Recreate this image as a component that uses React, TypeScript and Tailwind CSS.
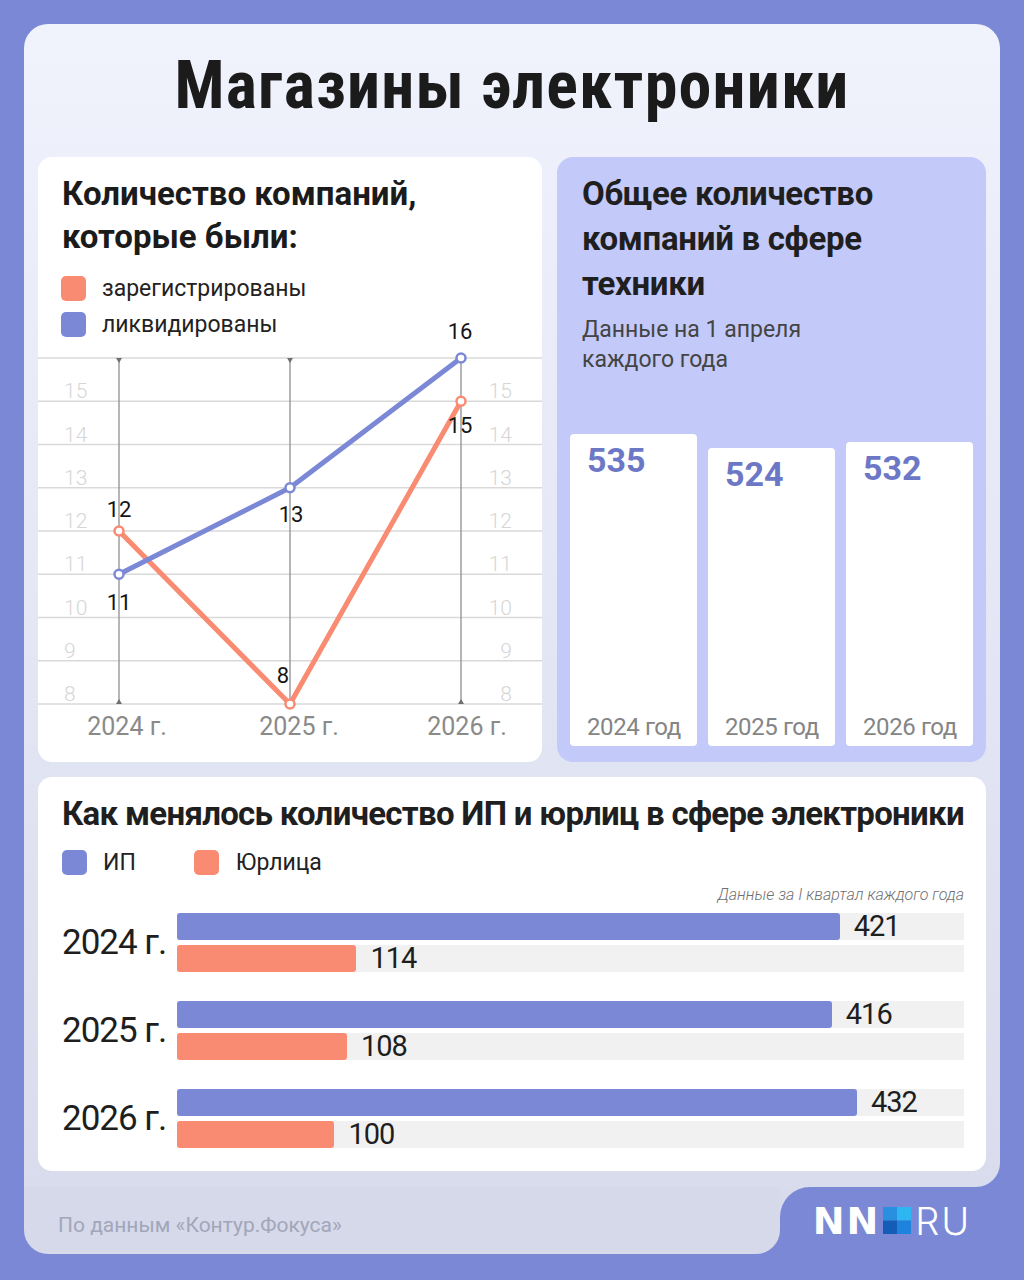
import React from 'react'

const yearly = [
  { year: '2024 г.', ip: 421, ul: 114 },
  { year: '2025 г.', ip: 416, ul: 108 },
  { year: '2026 г.', ip: 432, ul: 100 },
]

const totals = [
  { value: 535, label: '2024 год', height: 'h-[312px]' },
  { value: 524, label: '2025 год', height: 'h-[298px]' },
  { value: 532, label: '2026 год', height: 'h-[304px]' },
]

// chart geometry (svg coords)
const TOP = 21
const STEP = 43.25
const yOf = (v: number) => TOP + (16 - v) * STEP
const XS = [81, 252, 423]
const REG = [12, 8, 15]
const LIQ = [11, 13, 16]

function LineChart() {
  const gridValues = [16, 15, 14, 13, 12, 11, 10, 9, 8]
  const axisLabels = [15, 14, 13, 12, 11, 10, 9, 8]
  const pts = (arr: number[]) => arr.map((v, i) => `${XS[i]},${yOf(v)}`).join(' ')

  return (
    <svg width="504" height="424" viewBox="0 0 504 424" className="block overflow-visible">
      {gridValues.map((v) => (
        <line key={v} x1="0" x2="504" y1={yOf(v)} y2={yOf(v)} stroke="#d9d9d9" strokeWidth="1.3" />
      ))}
      {axisLabels.map((v) => (
        <g key={v} fill="#d6d6d6" fontSize="21" fontWeight="300" fontFamily="Roboto, sans-serif">
          <text x="26" y={yOf(v) - 3}>{v}</text>
          <text x="474" y={yOf(v) - 3} textAnchor="end">{v}</text>
        </g>
      ))}
      {XS.map((x) => (
        <line key={x} x1={x} x2={x} y1={TOP} y2={yOf(8)} stroke="#8f8f8f" strokeWidth="1.3" />
      ))}
      {/* ticks */}
      <g fill="#6f6f6f">
        <polygon points={`78,${TOP} 84,${TOP} 81,${TOP + 5}`} />
        <polygon points={`249,${TOP} 255,${TOP} 252,${TOP + 5}`} />
        <polygon points={`78,${yOf(8)} 84,${yOf(8)} 81,${yOf(8) - 5}`} />
        <polygon points={`420,${yOf(8)} 426,${yOf(8)} 423,${yOf(8) - 5}`} />
      </g>

      <polyline points={pts(REG)} fill="none" stroke="#f98b73" strokeWidth="5" strokeLinejoin="round" />
      <polyline points={pts(LIQ)} fill="none" stroke="#7b88d6" strokeWidth="5" strokeLinejoin="round" />
      {REG.map((v, i) => (
        <circle key={'r' + i} cx={XS[i]} cy={yOf(v)} r="4.5" fill="#fff" stroke="#f98b73" strokeWidth="2.5" />
      ))}
      {LIQ.map((v, i) => (
        <circle key={'l' + i} cx={XS[i]} cy={yOf(v)} r="4.5" fill="#fff" stroke="#7b88d6" strokeWidth="2.5" />
      ))}

      <g fill="#151515" fontSize="22" fontFamily="Roboto, sans-serif" textAnchor="middle">
        <text x="81" y="180">12</text>
        <text x="81" y="273">11</text>
        <text x="253" y="185">13</text>
        <text x="245" y="346">8</text>
        <text x="422" y="2">16</text>
        <text x="422" y="96">15</text>
      </g>

      <g fill="#8a8a8a" fontSize="25" fontFamily="Roboto, sans-serif" textAnchor="middle">
        <text x="89" y="398">2024 г.</text>
        <text x="261" y="398">2025 г.</text>
        <text x="429" y="398">2026 г.</text>
      </g>
    </svg>
  )
}

function Bar({ value, color }: { value: number; color: string }) {
  return (
    <div className="flex h-[27px] items-center bg-[#f1f1f1]">
      <div className={`h-full rounded-[3px] ${color}`} style={{ width: `${(value / 500) * 100}%` }} />
      <span className="ml-[14px] text-[29px] leading-none tracking-[-1px] text-[#1e1e1e]">{value}</span>
    </div>
  )
}

export default function App() {
  return (
    <div className="min-h-screen bg-[#7b88d6] px-[24px] pt-[24px] pb-[25px] font-['Roboto',sans-serif]">
      <div className="flex flex-col">
        <div className="rounded-t-[24px] rounded-br-[24px] bg-gradient-to-b from-[#f0f2fc] to-[#d8dcec] px-[14px] pb-[16px]">
          {/* Title */}
          <div className="flex h-[133px] items-center justify-center pb-[10px]">
            <h1 className="font-['Liberation_Sans_Narrow','Roboto_Condensed',sans-serif] text-[66px] leading-none font-bold tracking-[1.2px] text-[#1b1b1b]">
              Магазины электроники
            </h1>
          </div>

          <div className="flex gap-[15px]">
            {/* Line chart card */}
            <div className="flex h-[605px] w-[504px] flex-col overflow-hidden rounded-[14px] bg-white pt-[15px]">
              <h2 className="pl-[24px] text-[33px] leading-[43px] font-bold text-[#1b1b1b]">
                Количество компаний,
                <br />
                которые были:
              </h2>
              <div className="mt-[18px] flex flex-col gap-[11px] pl-[23px]">
                <div className="flex items-center gap-[16px]">
                  <span className="h-[25px] w-[25px] rounded-[5px] bg-[#f98b73]" />
                  <span className="text-[23px] leading-none text-[#222]">зарегистрированы</span>
                </div>
                <div className="flex items-center gap-[16px]">
                  <span className="h-[25px] w-[25px] rounded-[5px] bg-[#7b88d6]" />
                  <span className="text-[23px] leading-none text-[#222]">ликвидированы</span>
                </div>
              </div>
              <LineChart />
            </div>

            {/* Totals panel */}
            <div className="flex h-[605px] flex-1 flex-col rounded-[16px] bg-[#c3c9f8] px-[13px] pt-[14px] pb-[16px]">
              <h2 className="pl-[12px] text-[33px] leading-[45px] font-bold tracking-[-0.3px] text-[#1f1f1f]">
                Общее количество
                <br />
                компаний в сфере
                <br />
                техники
              </h2>
              <p className="mt-[9px] pl-[12px] text-[23px] leading-[30px] text-[#444]">
                Данные на 1 апреля
                <br />
                каждого года
              </p>
              <div className="mt-auto flex items-end gap-[11px]">
                {totals.map((t) => (
                  <div
                    key={t.label}
                    className={`flex flex-1 flex-col justify-between rounded-[4px] bg-white pt-[9px] pb-[7px] pl-[17px] ${t.height}`}
                  >
                    <span className="text-[34px] leading-none font-bold text-[#6c78c6]">{t.value}</span>
                    <span className="text-[24px] leading-none tracking-[-0.4px] whitespace-nowrap text-[#858585]">
                      {t.label}
                    </span>
                  </div>
                ))}
              </div>
            </div>
          </div>

          {/* Bars card */}
          <div className="mt-[15px] rounded-[14px] bg-white pt-[17px] pr-[22px] pb-[23px] pl-[24px]">
            <h2 className="text-[33px] leading-[40px] font-bold tracking-[-0.7px] whitespace-nowrap text-[#1f1f1f]">
              Как менялось количество ИП и юрлиц в сфере электроники
            </h2>
            <div className="mt-[16px] flex items-center">
              <span className="h-[25px] w-[25px] rounded-[5px] bg-[#7b88d6]" />
              <span className="ml-[16px] text-[23px] leading-none text-[#222]">ИП</span>
              <span className="ml-[58px] h-[25px] w-[25px] rounded-[5px] bg-[#f98b73]" />
              <span className="ml-[17px] text-[23px] leading-none text-[#222]">Юрлица</span>
            </div>
            <p className="mt-[10px] text-right text-[16px] leading-[20px] font-light text-[#707070] italic">
              Данные за I квартал каждого года
            </p>
            <div className="mt-[8px] flex flex-col gap-[29px]">
              {yearly.map((r) => (
                <div key={r.year} className="flex items-center">
                  <span className="w-[115px] text-[35px] leading-none tracking-[-1px] text-[#1e1e1e]">{r.year}</span>
                  <div className="flex flex-1 flex-col gap-[5px]">
                    <Bar value={r.ip} color="bg-[#7b88d6]" />
                    <Bar value={r.ul} color="bg-[#f98b73]" />
                  </div>
                </div>
              ))}
            </div>
          </div>
        </div>

        {/* Footer */}
        <div className="flex h-[67px]">
          <div className="flex flex-1 items-center rounded-b-[24px] bg-[#d5d9e9] pt-[10px] pl-[34px]">
            <span className="text-[21px] text-[#a2a6b9]">По данным «Контур.Фокуса»</span>
          </div>
          <div className="w-[220px] bg-[#d7dbeb]">
            <div className="flex h-full items-center justify-center rounded-tl-[30px] bg-[#7b88d6] pl-[4px]">
              <div className="flex items-center text-[38px] leading-none text-white">
                <span className="font-['DejaVu_Sans',sans-serif] font-bold tracking-[2px]">NN</span>
                <svg width="28" height="27" viewBox="0 0 28 27" className="mr-[4px] ml-[3px]">
                  <rect x="0" y="0" width="14" height="13.5" fill="#2b8fe0" />
                  <rect x="14" y="0" width="14" height="13.5" fill="#2cb7f2" />
                  <rect x="0" y="13.5" width="14" height="13.5" fill="#135db6" />
                  <rect x="14" y="13.5" width="14" height="13.5" fill="#1d83dc" />
                </svg>
                <span className="font-['Inter',sans-serif] font-light tracking-[2px]">RU</span>
              </div>
            </div>
          </div>
        </div>
      </div>
    </div>
  )
}
